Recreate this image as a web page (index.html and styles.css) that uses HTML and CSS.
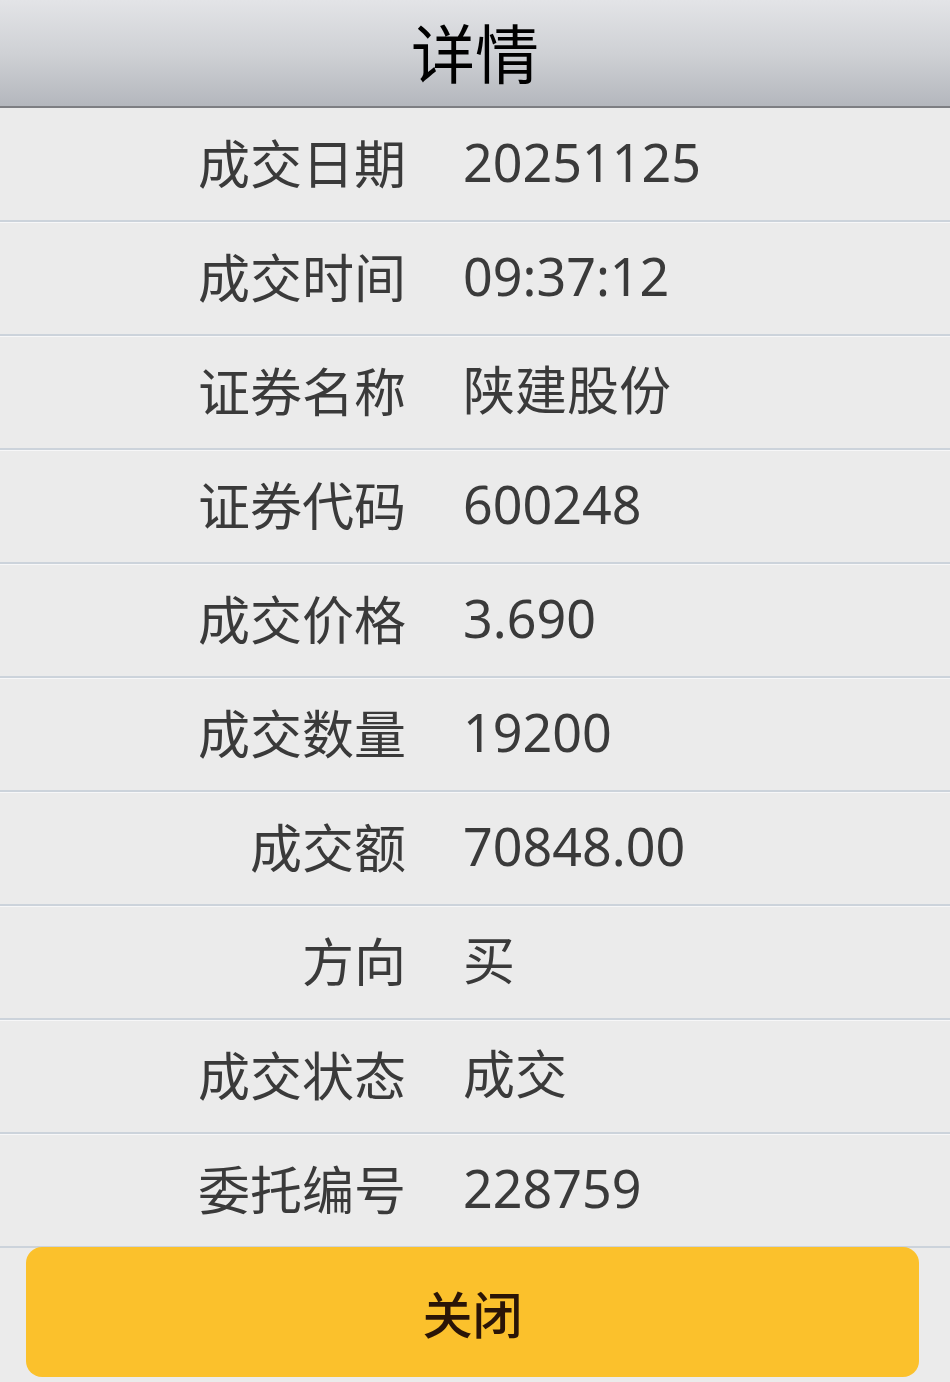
FILE: index.html
```html
<!DOCTYPE html>
<html lang="zh-CN">
<head>
<meta charset="utf-8">
<title>详情</title>
<link rel="stylesheet" href="styles.css">
</head>
<body>
<div class="page">
  <header class="header"><h1 class="title">详情</h1></header>
  <ul class="list">
    <li class="row"><span class="label">成交日期</span><span class="value">20251125</span></li>
    <li class="row"><span class="label">成交时间</span><span class="value">09:37:12</span></li>
    <li class="row"><span class="label">证券名称</span><span class="value">陕建股份</span></li>
    <li class="row"><span class="label">证券代码</span><span class="value">600248</span></li>
    <li class="row"><span class="label">成交价格</span><span class="value">3.690</span></li>
    <li class="row"><span class="label">成交数量</span><span class="value">19200</span></li>
    <li class="row"><span class="label">成交额</span><span class="value">70848.00</span></li>
    <li class="row"><span class="label">方向</span><span class="value">买</span></li>
    <li class="row"><span class="label">成交状态</span><span class="value">成交</span></li>
    <li class="row"><span class="label">委托编号</span><span class="value">228759</span></li>
  </ul>
  <div class="footer"><button class="close-btn" type="button">关闭</button></div>
</div>
</body>
</html>
```

FILE: styles.css
```css
* { box-sizing: border-box; }
html, body {
  margin: 0;
  padding: 0;
  background: #ebebeb;
}
body {
  font-family: "Noto Sans", "Noto Sans CJK SC", sans-serif;
  color: #333333;
}
.page {
  width: 950px;
  height: 1382px;
  display: flex;
  flex-direction: column;
  background: #ebebeb;
}
.header {
  height: 108px;
  background: linear-gradient(to bottom, #e3e4e7 0%, #cfd1d5 50%, #b4b7bd 100%);
  border-bottom: 2px solid #7d7e82;
  display: flex;
  align-items: center;
  justify-content: center;
}
.title {
  margin: 0;
  font-family: "Noto Sans CJK SC", sans-serif;
  font-size: 64px;
  font-weight: 400;
  color: #000000;
  line-height: 1;
  padding-bottom: 6px;
}
.list {
  list-style: none;
  margin: 0;
  padding: 0;
}
.row {
  height: 114px;
  display: flex;
  align-items: center;
  padding-bottom: 5px;
  border-top: 1px solid #f7f7f8;
  border-bottom: 2px solid #ccd3db;
  font-size: 52px;
  line-height: 1;
}
.row:first-child {
  border-top-color: #ebebeb;
}
.label {
  width: 406px;
  text-align: right;
  font-family: "Noto Sans CJK SC", sans-serif;
  color: #3a3a3a;
}
.value {
  margin-left: 57px;
  font-family: "Noto Sans", "Noto Sans CJK SC", sans-serif;
  color: #3a3a3a;
}
.footer {
  padding: 0 31px 0 26px;
  margin-top: -1px;
}
.close-btn {
  width: 100%;
  height: 130px;
  border: none;
  border-radius: 16px;
  background: #fbc12c;
  color: #2a1507;
  font-family: "Noto Sans CJK SC", sans-serif;
  font-size: 50px;
  font-weight: 500;
  padding: 0;
  display: flex;
  align-items: center;
  justify-content: center;
}
```
